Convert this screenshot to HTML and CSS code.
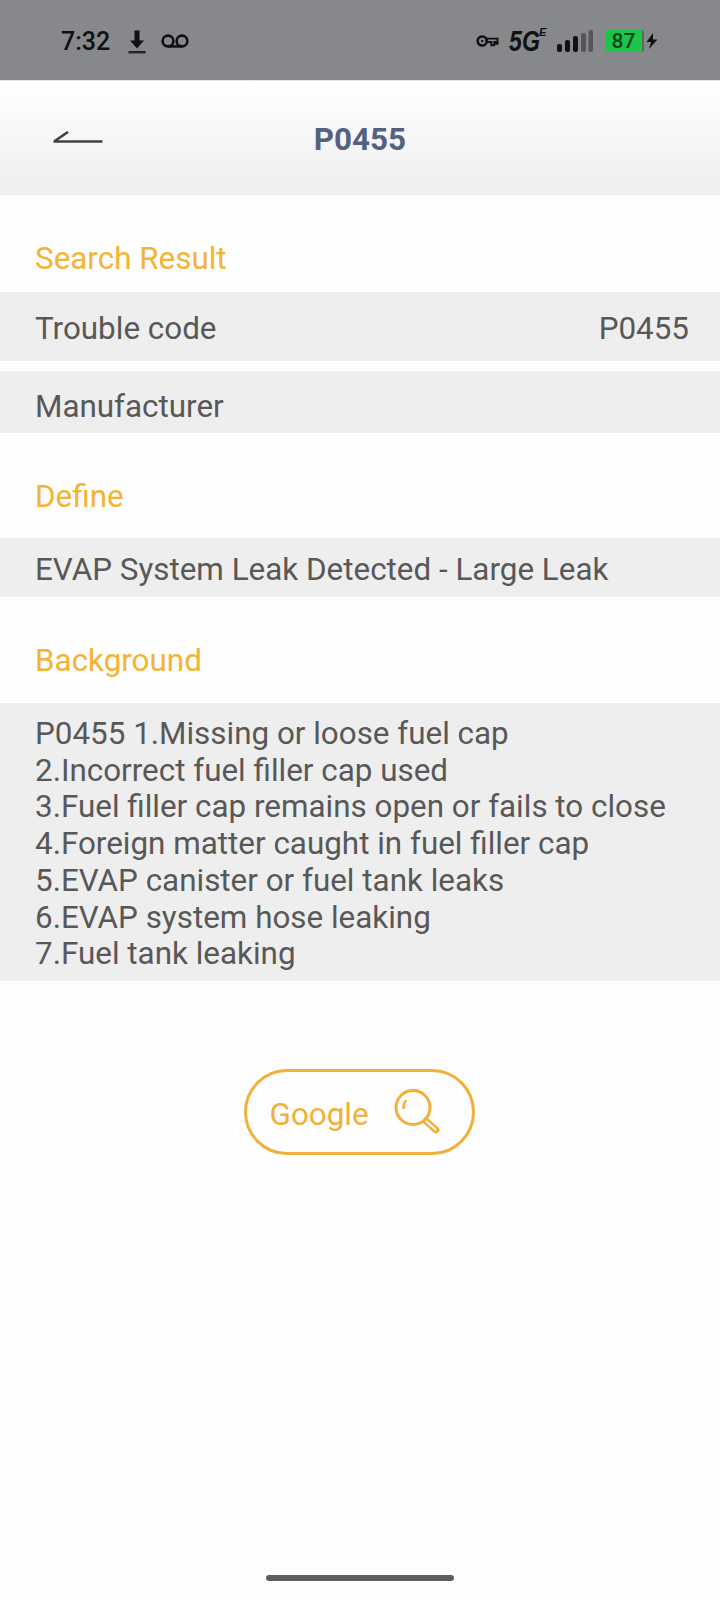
FILE: index.html
```html
<!DOCTYPE html>
<html lang="en">
<head>
<meta charset="utf-8">
<title>P0455</title>
<link rel="stylesheet" href="styles.css">
</head>
<body>
<div class="page">
  <div class="status">
    <div class="status-left">
      <span class="time">7:32</span>
      <svg class="ic-dl" viewBox="0 0 18 24"><path d="M6.500 0.500h5v10h4.500L9 18.500 2 10.500h4.500z" fill="#111"/><rect x="0.500" y="21" width="17" height="2.400" fill="#222"/></svg>
      <svg class="ic-vm" viewBox="0 0 28 14"><circle cx="7" cy="7" r="5.400" fill="none" stroke="#111" stroke-width="2.600"/><circle cx="21" cy="7" r="5.400" fill="none" stroke="#111" stroke-width="2.600"/><path d="M7 12.400h14" stroke="#111" stroke-width="2.600"/></svg>
    </div>
    <div class="status-right">
      <svg class="ic-key" viewBox="0 0 24 14"><circle cx="6.500" cy="7" r="4.800" fill="none" stroke="#111" stroke-width="2.600"/><circle cx="6.500" cy="7" r="1.300" fill="#111"/><path d="M11 4.500h11.500v5.500h-2V8h-1.500v3.500h-3V8H11z" fill="none" stroke="#111" stroke-width="2"/></svg>
      <span class="net"><span class="net-g">5G</span><span class="net-e">E</span></span>
      <svg class="ic-sig" viewBox="0 0 36 22"><rect x="0" y="14" width="5" height="8" rx="2" fill="#111"/><rect x="8" y="10" width="5" height="12" rx="2" fill="#111"/><rect x="16" y="6" width="5" height="16" rx="2" fill="#111"/><rect x="24" y="3" width="5" height="19" rx="2" fill="#55565a"/><rect x="31.500" y="0" width="4.500" height="22" rx="2" fill="#55565a"/></svg>
      <span class="batt">87</span>
      <svg class="ic-bolt" viewBox="0 0 12 16"><path d="M7 0 0.500 9h4.500l-2 7L11.500 6.500H7z" fill="#111"/></svg>
    </div>
  </div>
  <header class="topbar">
    <svg class="back" viewBox="0 0 50 12"><path d="M0.500 10.500h49M1 10.500 15 1" fill="none" stroke="#3f4149" stroke-width="2.600"/></svg>
    <h1 class="title">P0455</h1>
  </header>
  <h2 class="sec sec-first">Search Result</h2>
  <div class="row row-code"><span>Trouble code</span><span>P0455</span></div>
  <div class="row row-maker"><span>Manufacturer</span></div>
  <h2 class="sec sec-define">Define</h2>
  <div class="row row-define"><span>EVAP System Leak Detected - Large Leak</span></div>
  <h2 class="sec sec-bg">Background</h2>
  <div class="bgtext">P0455 1.Missing or loose fuel cap<br>2.Incorrect fuel filler cap used<br>3.Fuel filler cap remains open or fails to close<br>4.Foreign matter caught in fuel filler cap<br>5.EVAP canister or fuel tank leaks<br>6.EVAP system hose leaking<br>7.Fuel tank leaking</div>
  <div class="btn-wrap">
    <div class="google">
      <span class="google-label">Google</span>
      <svg class="ic-search" viewBox="0 0 46 46"><circle cx="19" cy="18.500" r="17" fill="none" stroke="#f0b03a" stroke-width="3"/><path d="M9.500 19c0-3 .5-5 2-7" fill="none" stroke="#f0b03a" stroke-width="2.600" stroke-linecap="round"/><path d="M32 32l10 9" fill="none" stroke="#f0b03a" stroke-width="7" stroke-linecap="round"/><path d="M32.500 32.500l9 8" fill="none" stroke="#fefefe" stroke-width="2" stroke-linecap="round"/></svg>
    </div>
  </div>
  <div class="home"></div>
</div>
</body>
</html>
```

FILE: styles.css
```css
html, body { margin: 0; padding: 0; }
body { background: #fefefe; font-family: Roboto, "Liberation Sans", sans-serif; color: #585858; }
.page { width: 720px; height: 1600px; display: flex; flex-direction: column; overflow: hidden; }
.status { background: #87888c; border-bottom: 1px solid #e4e4e6; display: flex; justify-content: space-between; align-items: center; color: #111; padding: 2px 0 0 61px; box-sizing: border-box; height: 81px; }
.status-left { display: flex; align-items: center; }
.time { font-size: 25px; font-weight: 500; letter-spacing: 0; width: 67px; }
.ic-dl { width: 18px; height: 24px; margin-top: 2px; }
.ic-vm { width: 28px; height: 14px; margin-left: 15px; }
.status-right { display: flex; align-items: center; margin-right: 62px; }
.ic-key { width: 23px; height: 14px; }
.net { margin-left: 10px; width: 38px; display: flex; align-items: flex-start; font-family: "Liberation Sans", sans-serif; font-weight: 700; font-style: italic; }
.net-g { display: inline-block; width: 30px; font-size: 29px; line-height: 28px; transform: scaleX(0.8); transform-origin: left center; white-space: nowrap; }
.net-e { font-size: 11px; line-height: 11px; }
.ic-sig { width: 36px; height: 22px; margin-left: 10px; }
.batt { width: 37px; height: 22px; margin-left: 12px; background: #1cc54a; border-radius: 3px; border-right: 2px solid #5d6a62; font-size: 21px; line-height: 22px; text-align: center; color: #10401f; font-weight: 500; }
.ic-bolt { width: 12px; height: 16px; margin-left: 2px; }
.topbar { height: 114px; background: linear-gradient(#ffffff, #eeeeef); position: relative; display: flex; align-items: center; justify-content: center; padding-top: 4px; box-sizing: border-box; }
.back { position: absolute; left: 53px; top: 50px; width: 50px; height: 12px; }
.title { margin: 0; font-size: 31.400px; line-height: 36px; font-weight: 700; color: #53607f; }
.sec { margin: 0; font-size: 31.400px; line-height: 36px; font-weight: 400; color: #f3b334; padding-left: 35px; }
.sec-first { margin-top: 46px; margin-bottom: 15px; }
.sec-define { margin-top: 46px; margin-bottom: 23px; }
.sec-bg { margin-top: 46px; margin-bottom: 24px; }
.row { background: #eeeeee; padding: 4px 31px 0 35px; box-sizing: border-box; display: flex; justify-content: space-between; align-items: center; font-size: 31.400px; }
.row-code { height: 69px; margin-bottom: 10px; }
.row-maker { height: 62px; padding-top: 8px; }
.row-define { height: 59px; }
.bgtext { background: #eeeeee; padding: 13px 35px 11px; font-size: 31.400px; line-height: 36.700px; height: 254px; }
.btn-wrap { display: flex; justify-content: center; margin-top: 88px; padding-right: 2px; }
.google { width: 231px; height: 86px; box-sizing: border-box; border: 3px solid #f0b03a; border-radius: 43px; display: flex; align-items: center; padding-left: 23px; font-size: 31.400px; color: #f0b03a; }
.google-label { margin-top: 4px; }
.ic-search { width: 46px; height: 46px; margin-left: 25px; }
.home { width: 188px; height: 6px; border-radius: 3px; background: #5e5e60; margin: auto auto 19px; }
```
